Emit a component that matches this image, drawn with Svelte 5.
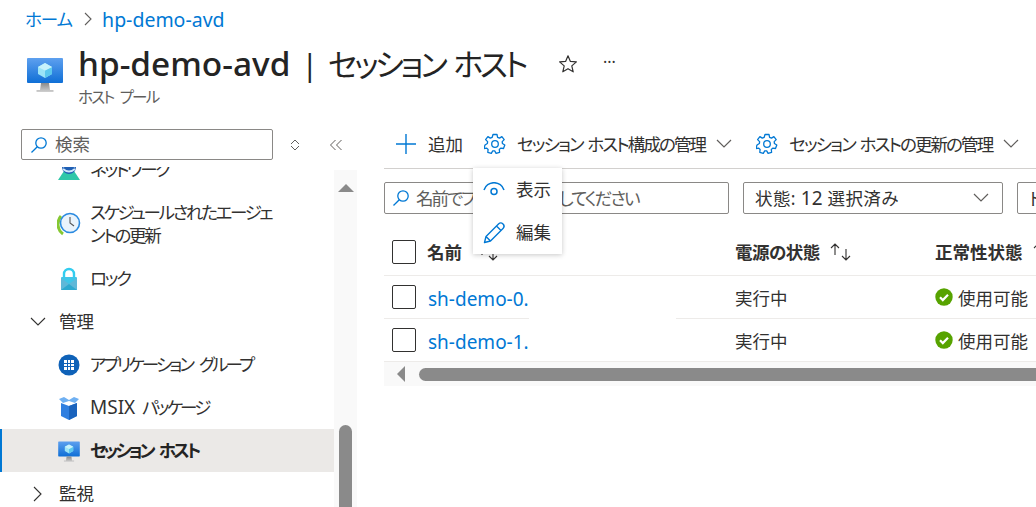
<script>
  const sideItems = [
    { label: 'ネットワーク', icon: 'net', h: 24, cls: 'clip' },
    { label: 'スケジュールされたエージェントの更新', icon: 'clock', h: 66 },
    { label: 'ロック', icon: 'lock', h: 43 }
  ];
  const rows = ['sh-demo-0.', 'sh-demo-1.'];
</script>

{#snippet monitor(w)}
  <svg width={w} height={w} viewBox="0 0 40 40" aria-hidden="true">
    <defs>
      <linearGradient id="scr" x1="0" y1="0" x2="0" y2="1"><stop offset="0" stop-color="#5ea0ef"/><stop offset="1" stop-color="#0f6fd6"/></linearGradient>
      <linearGradient id="std" x1="0" y1="0" x2="0" y2="1"><stop offset="0" stop-color="#8a8a8a"/><stop offset="1" stop-color="#d0d0d0"/></linearGradient>
    </defs>
    <rect x="2" y="4" width="36" height="25" rx="1" fill="url(#scr)"/>
    <path d="M16 29h8l1 7h3.500v2h-17v-2H15z" fill="url(#std)"/>
    <path d="M20 9l7 4v7l-7 4-7-4v-7z" fill="#9be4f7"/>
    <path d="M20 16.500l7-3.500v7l-7 4z" fill="#5cc8ee"/>
    <path d="M20 9l7 4-7 3.500-7-3.500z" fill="#c8f2fb"/>
  </svg>
{/snippet}

{#snippet gear()}
  <svg class="gear" width="22" height="22" viewBox="0 0 22 22" fill="none" stroke="#0078d4" stroke-width="1.300" aria-hidden="true">
    <circle cx="11" cy="11" r="3.300"/>
    <path d="M9 1.500h4l.6 2.800 1.900.8 2.400-1.500 2.300 3-2 2 .2 1.900 2.400 1.500-1.300 3.500-2.800-.4-1.400 1.400.3 2.800-3.500 1-1.400-2.400h-2l-1.400 2.400-3.500-1 .3-2.800-1.400-1.400-2.800.4L1 12l2.400-1.500.2-1.900-2-2 2.300-3 2.400 1.500 1.900-.8z" stroke-linejoin="round"/>
  </svg>
{/snippet}

{#snippet chev(w = 16)}
  <svg width={w} height="10" viewBox="0 0 16 10" fill="none" stroke="#605e5c" stroke-width="1.200" aria-hidden="true"><path d="M1 1l7 7 7-7"/></svg>
{/snippet}

{#snippet search()}
  <svg class="mag" width="18" height="18" viewBox="0 0 18 18" fill="none" stroke="#0078d4" stroke-width="1.300" aria-hidden="true"><circle cx="11" cy="7" r="5.200"/><path d="M7.300 10.700L1.500 16.500"/></svg>
{/snippet}

{#snippet check()}
  <svg class="ok" width="18" height="18" viewBox="0 0 18 18" aria-hidden="true"><circle cx="9" cy="9" r="8.700" fill="#57a300"/><path d="M5 9.300l2.800 2.800L13 6.800" fill="none" stroke="#fff" stroke-width="2.200"/></svg>
{/snippet}

{#snippet sort()}
  <svg class="sort" width="24" height="18" viewBox="0 0 24 18" fill="none" stroke="#323130" stroke-width="1.100" aria-hidden="true"><path d="M6 12V1M2 5l4-4 4 4M17 6v11M13 13l4 4 4-4"/></svg>
{/snippet}

<div class="page">
  <nav class="crumbs">
    <a class="home" href="#home">ホーム</a>
    <svg width="8" height="14" viewBox="0 0 8 14" fill="none" stroke="#605e5c" stroke-width="1.100" aria-hidden="true"><path d="M1 1l6 6-6 6"/></svg>
    <a class="latin crumb-pool" href="#pool">hp-demo-avd</a>
  </nav>

  <header class="head">
    <div class="head-icon">{@render monitor(40)}</div>
    <div class="head-text">
      <div class="title-row">
        <h1><b>hp-demo-avd</b><span class="bar">|</span><span class="sub-title">セッション ホスト</span></h1>
        <svg class="star" width="20" height="20" viewBox="0 0 20 20" fill="none" stroke="#323130" stroke-width="1.200" aria-hidden="true"><path d="M10 1.800l2.400 5.600 6 .5-4.600 4 1.400 5.900-5.200-3.100-5.200 3.100 1.400-5.900-4.600-4 6-.5z" stroke-linejoin="round"/></svg>
        <span class="more">···</span>
      </div>
      <div class="kind">ホスト プール</div>
    </div>
  </header>

  <div class="body">
    <aside class="side">
      <div class="side-top">
        <div class="side-search">{@render search()}<span>検索</span></div>
        <svg class="updown" width="10" height="14" viewBox="0 0 10 14" fill="none" stroke="#605e5c" aria-hidden="true"><path d="M1 6l4-4 4 4M1 8l4 4 4-4"/></svg>
        <svg class="collapse" width="14" height="12" viewBox="0 0 14 12" fill="none" stroke="#605e5c" aria-hidden="true"><path d="M6.500 1l-5 5 5 5M12.500 1l-5 5 5 5"/></svg>
      </div>
      <div class="side-scroll">
        <div class="side-list">
          {#each sideItems as item}
            <div class="item {item.cls ?? ''}" style="height:{item.h}px">
              <span class="item-icon">
                {#if item.icon === 'net'}
                  <svg width="24" height="24" viewBox="0 0 24 24" aria-hidden="true"><path d="M1 23l6-9h10l6 9z" fill="#2fc7a8"/><circle cx="12" cy="10" r="7" fill="#1f5fb4"/><path d="M6 10q6-6 12 0M6 12q6 5 12 0" fill="none" stroke="#cfe6fb" stroke-width="2"/></svg>
                {:else if item.icon === 'clock'}
                  <svg width="24" height="24" viewBox="0 0 24 24" aria-hidden="true"><path d="M6 22C0 18-.5 9 4 4" fill="none" stroke="#86c832" stroke-width="3"/><circle cx="13" cy="11" r="9.500" fill="#e9f3fc" stroke="#2a8ae0" stroke-width="1.600"/><path d="M13 5v6l4 3" fill="none" stroke="#555" stroke-width="1.100"/></svg>
                {:else}
                  <svg width="24" height="24" viewBox="0 0 24 24" aria-hidden="true"><path d="M7 11V7a5 5 0 0110 0v4" fill="none" stroke="#32cdf0" stroke-width="2.400"/><rect x="4" y="10" width="16" height="13" rx="1" fill="#3fc6e8"/><path d="M4 11l8 6 8-6v12H4z" fill="#5fb8d8"/><path d="M4 23l8-6 8 6z" fill="#2ea9cf"/></svg>
                {/if}
              </span>
              <span class="item-label">{item.label}</span>
            </div>
          {/each}
          <div class="group">
            <svg width="16" height="10" viewBox="0 0 16 10" fill="none" stroke="#323130" stroke-width="1.100" aria-hidden="true"><path d="M1 1l7 7 7-7"/></svg>
            <span>管理</span>
          </div>
          <div class="item">
            <span class="item-icon">
              <svg width="22" height="22" viewBox="0 0 22 22" aria-hidden="true"><circle cx="11" cy="11" r="10.500" fill="#0f62b8"/><path d="M6 6h10v10H6z" fill="#fff"/><path d="M6 9.500h10M6 12.500h10M9.500 6v10M12.500 6v10" stroke="#0f62b8"/></svg>
            </span>
            <span class="item-label wide">アプリケーション グループ</span>
          </div>
          <div class="item">
            <span class="item-icon">
              <svg width="22" height="24" viewBox="0 0 22 24" aria-hidden="true"><path d="M3 7l8 3 8-3v13l-8 4-8-4z" fill="#2f7fe0"/><path d="M11 10l8-3v13l-8 4z" fill="#1a63bd"/><path d="M1 3l5-2 5 3 5-3 5 2-4 4-6-2-6 2z" fill="#6fb0f2"/></svg>
            </span>
            <span class="item-label wide"><span class="latin">MSIX</span> パッケージ</span>
          </div>
          <div class="item selected">
            <span class="item-icon">{@render monitor(24)}</span>
            <span class="item-label wide">セッション ホスト</span>
          </div>
          <div class="group">
            <svg class="right" width="10" height="16" viewBox="0 0 10 16" fill="none" stroke="#323130" stroke-width="1.100" aria-hidden="true"><path d="M1 1l7 7-7 7"/></svg>
            <span>監視</span>
          </div>
        </div>
        <div class="side-bar">
          <span class="up"></span>
          <span class="thumb"></span>
        </div>
      </div>
    </aside>

    <main class="main">
      <div class="toolbar">
        <div class="tool">
          <svg width="22" height="22" viewBox="0 0 22 22" stroke="#0078d4" stroke-width="1.400" aria-hidden="true"><path d="M11 1v20M1 11h20"/></svg>
          <span>追加</span>
        </div>
        <div class="tool mg">
          {@render gear()}
          <span>セッション ホスト構成の管理</span>
          {@render chev()}
        </div>
        <div class="tool mg">
          {@render gear()}
          <span>セッション ホストの更新の管理</span>
          {@render chev()}
        </div>
      </div>

      <div class="filters">
        <div class="field name-filter">{@render search()}<span>名前でフィルター処理してください</span></div>
        <div class="field state">
          <span>状態: <span class="latin">12</span> 選択済み</span>
          {@render chev()}
        </div>
        <div class="field next"><span>ドメイン</span></div>
      </div>

      <div class="table">
        <div class="tr th">
          <span class="box"></span>
          <span class="c1">名前 {@render sort()}</span>
          <span class="c2">電源の状態 {@render sort()}</span>
          <span class="c3">正常性状態 {@render sort()}</span>
        </div>
        {#each rows as r, i}
          <div class="tr">
            <span class="box"></span>
            <a class="c1" href="#host">{r}</a>
            <span class="c2">実行中</span>
            <span class="c3">{@render check()}使用可能</span>
            {#if i === 0}<span class="redact"></span>{/if}
          </div>
        {/each}
      </div>

      <div class="hbar">
        <span class="left"></span>
        <span class="hthumb"></span>
      </div>

      <div class="menu">
        <div class="menu-item">
          <svg width="22" height="16" viewBox="0 0 22 16" fill="none" stroke="#0078d4" stroke-width="1.500" aria-hidden="true"><path d="M1 8a10.500 10.500 0 0120 0"/><circle cx="11" cy="9.500" r="3"/></svg>
          <span>表示</span>
        </div>
        <div class="menu-item">
          <svg width="22" height="22" viewBox="0 0 22 22" fill="none" stroke="#0078d4" stroke-width="1.400" aria-hidden="true"><path d="M1.500 20.500l1.500-6L15.500 2a2.800 2.800 0 014.500 4.500L7.500 19zM3 14.500l4.500 4.500M13.500 4l4.500 4.500" stroke-linejoin="round"/></svg>
          <span>編集</span>
        </div>
      </div>
    </main>
  </div>
</div>

<style>
  :global(body) { margin: 0; background: #fff; overflow: hidden; }
  .page {
    width: 1036px; height: 507px; overflow: hidden; background: #fff; color: #323130;
    font-family: "Noto Sans", "Noto Sans CJK JP", sans-serif; font-size: 17.500px; line-height: 23px;
    font-feature-settings: "palt";
  }
  a { color: #0078d4; text-decoration: none; }
  svg { flex: none; display: block; }
  .latin { font-size: 19px; letter-spacing: 0; }

  .crumbs { height: 38px; padding-left: 25px; display: flex; align-items: center; gap: 12px; }
  .home { letter-spacing: -1px; }
  .crumb-pool { font-size: 19.500px; margin-left: -2px; }
  .head { height: 86px; padding-left: 25px; display: flex; gap: 13px; box-sizing: border-box; }
  .head-icon { padding-top: 16px; }
  .head-text { display: flex; flex-direction: column; }
  .title-row { display: flex; align-items: center; height: 52px; }
  h1 { margin: 0; font-size: 31px; font-weight: 400; line-height: 52px; display: flex; align-items: baseline; color: #242424; width: 480px; white-space: nowrap; }
  h1 b { font-weight: 500; font-size: 33.400px; }
  .bar { margin: 0 10px 0 11px; font-size: 30px; }
  .sub-title { letter-spacing: -3.300px; word-spacing: 4px; }
  .more { margin-left: 25px; font-size: 16px; position: relative; top: -2px; }
  .kind { font-size: 15.500px; line-height: 18px; color: #605e5c; margin-top: -2px; letter-spacing: -1.800px; word-spacing: 4px; }

  .body { display: flex; height: 383px; }
  .side { width: 384px; flex: none; display: flex; flex-direction: column; }
  .side-top { height: 31px; padding: 5px 0 0 21px; display: flex; align-items: center; }
  .side-search { width: 252px; height: 31px; box-sizing: border-box; border: 1px solid #8a8886; border-radius: 2px; display: flex; align-items: center; gap: 7px; padding-left: 8px; color: #605e5c; }
  .updown { margin-left: 17px; }
  .collapse { margin-left: 29px; }
  .side-scroll { display: flex; width: 357px; flex: 1; min-height: 0; overflow: hidden; margin-top: 7px; }
  .side-list { width: 334px; flex: none; }
  .item { height: 43px; display: flex; align-items: center; padding-left: 57px; box-sizing: border-box; overflow: hidden; }
  .item-icon { width: 24px; height: 24px; margin-right: 9px; display: flex; align-items: center; justify-content: center; flex: none; }
  .item-label { line-height: 23px; width: 186px; letter-spacing: -2.300px; }
  .item-label.wide { width: 240px; letter-spacing: -2.800px; word-spacing: 5px; }
  .item.clip { align-items: flex-start; }
  .item.clip .item-icon { margin-top: -10px; }
  .item.clip .item-label { margin-top: -9px; }
  .item.selected { background: #ebe9e7; box-shadow: inset 2px 0 0 #0078d4; font-weight: 600; color: #242424; }
  .item.selected .item-label { letter-spacing: -3.100px; }
  .group { height: 43px; display: flex; align-items: center; padding-left: 30px; gap: 13px; }
  .group .right { margin: 0 3px 0 3px; }
  .side-bar { width: 23px; flex: none; background: #f9f9f9; position: relative; margin-top: 3px; display: flex; flex-direction: column; align-items: center; }
  .up { margin-top: 14px; border: 8px solid transparent; border-top: 0; border-bottom: 8px solid #8a8a8a; }
  .thumb { position: absolute; top: 255px; left: 5px; width: 13px; height: 120px; border-radius: 7px 7px 0 0; background: #8a8a8a; }

  .main { flex: 1; min-width: 0; position: relative; overflow: hidden; }
  .toolbar { height: 40px; padding: 0 0 4px 11px; border-bottom: 1px solid #d2d0ce; display: flex; align-items: center; gap: 21px; white-space: nowrap; }
  .tool { display: flex; align-items: center; gap: 11px; }
  .tool.mg + .tool.mg { margin-left: 3px; }
  .tool.mg span { letter-spacing: -1.900px; word-spacing: 2px; }
  .filters { display: flex; gap: 14px; padding-top: 13px; height: 32px; white-space: nowrap; }
  .field { height: 32px; box-sizing: border-box; border: 1px solid #8a8886; border-radius: 2px; display: flex; align-items: center; padding: 0 12px 0 7px; flex: none; }
  .name-filter { width: 345px; gap: 6px; color: #605e5c; }
  .name-filter span { letter-spacing: -2px; }
  .state { width: 260px; justify-content: space-between; padding-left: 11px; padding-right: 13px; }
  .state > span { letter-spacing: 0.400px; }
  .next { width: 100px; padding-left: 11px; }

  .table { margin-top: 14px; width: 652px; }
  .tr { height: 43px; border-bottom: 1px solid #edebe9; box-sizing: border-box; display: flex; align-items: center; position: relative; white-space: nowrap; }
  .th { height: 48px; padding-top: 1px; font-weight: 600; }
  .box { width: 24px; height: 24px; box-sizing: border-box; border: 1px solid #323130; border-radius: 2px; margin-left: 8px; flex: none; }
  .c1, .c2, .c3 { position: absolute; display: flex; align-items: center; margin-top: 2px; }
  .th .c1, .th .c2, .th .c3 { margin-top: 0; gap: 9px; }
  .c1 { left: 44px; font-size: 19px; margin-top: 5px; }
  .th .c1 { font-size: 17.500px; left: 43px; gap: 14px; }
  .c2 { left: 351px; }
  .th .c2 { letter-spacing: -0.500px; }
  .c3 { left: 551px; gap: 5px; }
  .redact { position: absolute; left: 145px; width: 147px; bottom: -1px; height: 3px; background: #fff; }
  .ok { margin-top: -3px; }

  .hbar { height: 24px; width: 652px; background: #f9f9f9; position: relative; display: flex; align-items: center; }
  .left { margin-left: 13px; border: 8px solid transparent; border-left: 0; border-right: 8px solid #8a8a8a; }
  .hthumb { position: absolute; left: 35px; right: 0; top: 6px; height: 13px; border-radius: 7px 0 0 7px; background: #8a8a8a; }

  .menu { position: absolute; left: 89px; top: 44px; width: 89px; height: 86px; background: #fff; box-shadow: 0 1px 5px rgba(0,0,0,.22); display: flex; flex-direction: column; }
  .menu-item { height: 43px; display: flex; align-items: center; gap: 11px; padding-left: 10px; }
</style>
